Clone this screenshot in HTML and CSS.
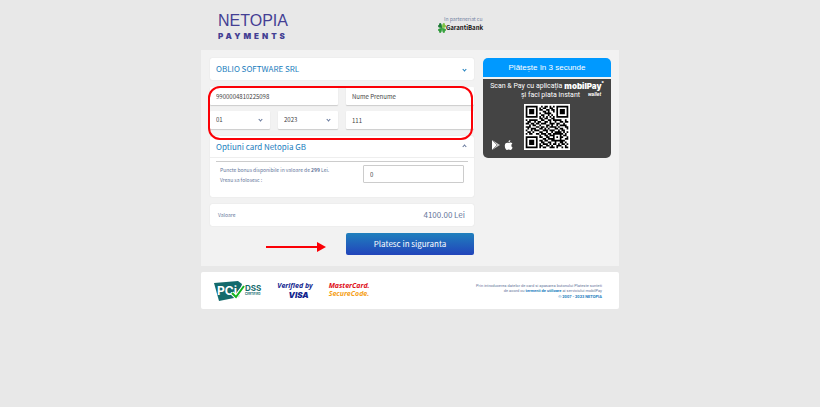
FILE: index.html
```html
<!DOCTYPE html>
<html lang="ro">
<head>
  <meta charset="UTF-8" />
  <meta name="viewport" content="width=device-width, initial-scale=1" />
  <title>Netopia Payments</title>
  <link rel="stylesheet" href="styles.css">
</head>
<body>

  <div class="page">
    <header>
      <div class="logo">
        <div class="logo-name">NETOPIA</div>
        <div class="logo-sub">PAYMENTS</div>
      </div>
      <div class="partner">
        <div class="partner-label">In parteneriat cu</div>
        <div class="partner-name">
          <svg width="8" height="10" viewBox="0 0 8 10" aria-hidden="true">
            <path d="M4 5C1 5 0 4 0 3q0-1 1-1Q1 0 2 0q2 0 2 5z" fill="#1c7a35"/>
            <path d="M4 5C1 5 0 6 0 7q0 1 1 1Q1 10 2 10q2 0 2-5z" fill="#2f9a3a"/>
            <path d="M4 5C7 5 8 4 8 3q0-1-1-1Q7 0 6 0 4 0 4 5z" fill="#7cc242"/>
            <path d="M4 5C7 5 8 6 8 7q0 1-1 1Q7 10 6 10 4 10 4 5z" fill="#3aa43f"/>
          </svg>
          <span>GarantiBank</span>
        </div>
      </div>
    </header>

    <main class="panel">
      <form class="payment" onsubmit="return false">
        <button type="button" class="card card-title">
          <span>OBLIO SOFTWARE SRL</span>
          <span class="chevron blue"></span>
        </button>

        <div class="card-fields">
          <input type="text" aria-label="Numar card" value="9900004810225098">
          <input type="text" aria-label="Nume pe card" value="Nume Prenume">
          <div class="expiry">
            <div class="select">
              <select aria-label="Luna"><option>01</option></select>
              <span class="chevron"></span>
            </div>
            <div class="select">
              <select aria-label="An"><option>2023</option></select>
              <span class="chevron"></span>
            </div>
          </div>
          <input type="text" aria-label="CVV" value="111">
        </div>

        <section class="card options">
          <button type="button" class="card-title">
            <span>Optiuni card Netopia GB</span>
            <span class="chevron up"></span>
          </button>
          <div class="bonus">
            <label for="bonus">Puncte bonus disponibile in valoare de <b>299</b> Lei.<br>Vreau sa folosesc :</label>
            <input type="text" id="bonus" value="0">
          </div>
        </section>

        <div class="card total">
          <span>Valoare</span>
          <span class="amount">4100.00 Lei</span>
        </div>

        <div class="actions">
          <svg class="arrow" width="60" height="10" viewBox="0 0 60 10" aria-hidden="true">
            <path d="M0 5h52" stroke="#fb0006" stroke-width="2"/>
            <path d="M51 0l9 5-9 5z" fill="#fb0006"/>
          </svg>
          <button type="submit" class="pay">Platesc in siguranta</button>
        </div>
      </form>

      <aside class="wallet">
        <div class="wallet-head">Plătește în 3 secunde</div>
        <div class="wallet-body">
          <div class="wallet-line">
            <span>Scan &amp; Pay cu aplicația</span>
            <strong>mobilPay<sup>°</sup></strong>
          </div>
          <div class="wallet-line second">
            <span>și faci plata instant</span>
            <em>wallet</em>
          </div>
          <div class="wallet-code">
            <div class="stores">
              <svg width="9" height="10" viewBox="0 0 9 10" aria-hidden="true">
                <path d="M1 0v10l8-5z" fill="#c9c9c9"/>
                <path d="M1 0l5 5-5 5z" fill="#fff"/>
                <path d="M1 0l5 5-5 5" fill="none" stroke="#666" stroke-width=".6"/>
              </svg>
              <svg width="9" height="10" viewBox="0 0 9 10" aria-hidden="true">
                <path d="M4.500 3C3.500 2.500 1 2.300.8 5.500.7 8 2 10 3 10q.8-.4 1.700-.4T6.400 10C7.300 10 8.400 8.400 8.600 7.400 7 6.600 7 4.300 8.400 3.600 7.200 2 5.300 2.600 4.500 3zM4.400 2.300Q4.500.3 6.300 0 6.400 2 4.400 2.300z" fill="#fff"/>
              </svg>
            </div>
            <svg class="qr" id="qr" width="46" height="46" viewBox="-1 -1 27 27" role="img" aria-label="Cod QR"></svg>
          </div>
        </div>
      </aside>
    </main>

    <footer>
      <div class="badges">
        <div class="pci">
          <svg width="31" height="20" viewBox="0 0 31 20" aria-hidden="true">
            <path d="M0 2L24 0 28 3 25 16 5 20z" fill="#136a6c"/>
            <text x="3" y="14" class="pci-text">PCi</text>
            <path d="M18 12l4 4 8-11" fill="none" stroke="#fff" stroke-width="4"/>
            <path d="M18 12l4 4 8-11" fill="none" stroke="#12b41d" stroke-width="2"/>
          </svg>
          <div class="dss">DSS<small>CERTIFIED</small></div>
        </div>
        <div class="visa"><i>Verified by</i><b>VISA</b></div>
        <div class="mastercard">MasterCard.<span>SecureCode.</span></div>
      </div>
      <div class="legal">
        <p>Prin introducerea datelor de card si apasarea butonului Plateste sunteti<br>
        de acord cu <a href="#">termenii de utilizare</a> ai serviciului mobilPay</p>
        <a href="#">© 2007 - 2023 NETOPIA</a>
      </div>
    </footer>
  </div>

  <script src="script.js"></script>
</body>
</html>
```
FILE: styles.css
```css
* {
  box-sizing: border-box;
}
body {
  margin: 0;
  background: #e8e8e8;
  color: #444;
  font-family: 'Noto Sans CJK SC', 'Open Sans', sans-serif;
  font-size: 6px;
  line-height: 10px;
}
input, select, button {
  font: inherit;
  color: inherit;
  margin: 0;
}
a {
  color: #1a7dbd;
  font-weight: bold;
  text-decoration: none;
}
.page {
  max-width: 418px;
  margin: 0 auto;
}

/* header */
header {
  display: flex;
  padding: 12px 17px 8px;
}
.logo {
  flex: 1;
  color: #443f94;
  font-family: 'Liberation Sans', sans-serif;
}
.logo-name {
  font-size: 16px;
  line-height: 18px;
}
.logo-sub {
  font-family: Inter, sans-serif;
  font-size: 8px;
  font-weight: 900;
  line-height: 12px;
  letter-spacing: 3px;
}
.partner {
  flex: 0 0 164px;
  color: #7483a3;
  font-size: 5px;
}
.partner-label {
  padding: 2px 0 0 6px;
  line-height: 9px;
}
.partner-name {
  display: flex;
  align-items: center;
  color: #111;
  font-size: 6px;
  font-weight: bold;
}

/* main panel */
.panel {
  display: grid;
  grid-template-columns: minmax(0, 264fr) minmax(0, 128fr);
  align-items: start;
  gap: 9px;
  padding: 8px 8px 11px 9px;
  background: #f2f2f2;
}
.payment {
  display: flex;
  flex-direction: column;
  gap: 7px;
}
.card {
  background: #fff;
  border: 0;
  border-radius: 2px;
  box-shadow: 0 0 1px #ccc;
}
.card-title {
  display: flex;
  align-items: center;
  justify-content: space-between;
  width: 100%;
  height: 22px;
  padding: 0 8px 0 6px;
  color: #1a7dbd;
  font-size: 8px;
  cursor: pointer;
}
.chevron {
  width: 3px;
  height: 3px;
  border: solid #66779b;
  border-width: 0 1px 1px 0;
  transform: rotate(45deg);
}
.chevron.blue {
  border-color: #1a7dbd;
}
.chevron.up {
  transform: rotate(225deg);
}
.card-fields {
  position: relative;
  display: grid;
  grid-template-columns: 1fr 1fr;
  gap: 6px 8px;
}
/* red outline over the card data */
.card-fields::after {
  content: '';
  position: absolute;
  inset: -1px 1px -11px -2px;
  border: 2px solid #fb0006;
  border-radius: 12px;
  pointer-events: none;
}
input, select {
  width: 100%;
  min-width: 0;
  height: 18px;
  padding: 0 6px;
  background: #fff;
  border: 0;
  border-radius: 1px;
  box-shadow: 0 1px 1px #ccc;
  appearance: none;
}
.expiry {
  display: grid;
  grid-template-columns: 1fr 1fr;
  gap: 8px;
}
.select {
  position: relative;
}
.select .chevron {
  position: absolute;
  right: 8px;
  top: 7px;
  pointer-events: none;
}
.options .card-title {
  background: none;
  border: 0;
  border-bottom: 1px solid #eee;
}
.bonus {
  display: flex;
  justify-content: space-between;
  margin: 3px 6px 0;
  padding: 3px 4px 12px;
  border-top: 1px solid #ccc;
  color: #66779b;
  font-size: 5px;
}
.bonus input {
  width: 101px;
  border: 1px solid #ccc;
  box-shadow: none;
  color: #444;
  font-size: 6px;
}
.total {
  display: flex;
  align-items: center;
  justify-content: space-between;
  height: 22px;
  padding: 0 9px 0 8px;
  color: #66779b;
  font-size: 5px;
}
.amount {
  font-size: 8px;
}
.actions {
  display: flex;
  align-items: center;
  justify-content: flex-end;
  gap: 20px;
}
.arrow {
  margin-top: 6px;
}
.pay {
  width: 128px;
  height: 22px;
  padding: 0;
  border: 0;
  border-radius: 2px;
  background: linear-gradient(#2080bd, #2244bb);
  color: #fff;
  font-size: 8px;
  cursor: pointer;
}

/* wallet box */
.wallet {
  display: flex;
  flex-direction: column;
  gap: 2px;
  color: #fff;
  font-family: Roboto, sans-serif;
}
.wallet-head {
  border-radius: 5px 5px 0 0;
  background: #0099ff;
  font-family: 'Liberation Sans', sans-serif;
  font-size: 8px;
  line-height: 19px;
  text-align: center;
}
.wallet-body {
  padding: 3px 8px 8px;
  border-radius: 0 0 5px 5px;
  background: #444;
  font-size: 7px;
}
.wallet-line {
  display: flex;
  justify-content: center;
  gap: 2px;
  line-height: 9px;
  white-space: nowrap;
}
.wallet-line strong {
  font-family: Inter, sans-serif;
  font-size: 8px;
  font-weight: 900;
}
.wallet-line sup {
  font-size: 5px;
  line-height: 0;
}
.wallet-line.second {
  gap: 8px;
  padding-left: 28px;
}
.wallet-line em {
  font-size: 5px;
  font-weight: bold;
  line-height: 7px;
}
.wallet-code {
  display: grid;
  grid-template-columns: 1fr auto 1fr;
  align-items: end;
  margin-top: 4px;
}
.stores {
  display: flex;
  gap: 4px;
}
.qr {
  background: #fff;
}

/* footer */
footer {
  display: flex;
  justify-content: space-between;
  margin-top: 6px;
  padding: 9px 17px 8px 13px;
  background: #fff;
  border-radius: 2px;
}
.badges {
  display: flex;
  gap: 16px;
  font-size: 8px;
  line-height: 8px;
}
.pci {
  display: flex;
  color: #136a6c;
}
.pci-text {
  fill: #fff;
  font: bold 12px Inter, sans-serif;
}
.dss {
  padding-top: 3px;
  font-family: Inter, sans-serif;
  font-weight: bold;
}
.dss small {
  display: block;
  font-size: 3px;
  line-height: 5px;
}
.visa {
  color: #13278f;
  font-family: 'Open Sans', sans-serif;
  font-weight: bold;
  font-size: 7px;
  line-height: 10px;
  text-align: right;
}
.visa b {
  display: block;
  padding-right: 4px;
  font-family: Inter, sans-serif;
  font-size: 8px;
  font-style: italic;
  line-height: 8px;
}
.mastercard {
  padding-top: 1px;
  color: #e0101a;
  font-family: 'Open Sans', sans-serif;
  font-weight: bold;
  font-style: italic;
  font-size: 7px;
}
.mastercard span {
  display: block;
  color: #f5a11a;
}
.legal {
  padding-top: 2px;
  color: #66779b;
  font-family: Roboto, sans-serif;
  font-size: 4px;
  line-height: 5px;
  text-align: right;
}
.legal p {
  margin: 0 0 1px;
}
```
FILE: script.js
```js
// QR modules, one string per row
const rows = [
  '1111111001011010101111111',
  '1000001010110011001000001',
  '1011101011001101101011101',
  '1011101000110100101011101',
  '1011101010011110001011101',
  '1000001001100101001000001',
  '1111111010101010101111111',
  '0000000011011001100000000',
  '1011111001100110111110010',
  '0110010110011010010011011',
  '1101101101110011101100100',
  '0010110010001101001011110',
  '1110001101101011110100011',
  '0101110011010100011011001',
  '1001011100111011100101100',
  '0110100011001001011110101',
  '1011001101110110111111010',
  '0000000010011011100010110',
  '1111111011001100101011001',
  '1000001000110111100010011',
  '1011101011011001111111100',
  '1011101001100110010011010',
  '1011101010111010110101101',
  '1000001011001101001110010',
  '1111111010110011101001011'
];
let d = '';
rows.forEach((row, y) => {
  [...row].forEach((cell, x) => {
    if (cell === '1') d += `M${x} ${y}h1v1h-1z`;
  });
});
document.getElementById('qr').innerHTML = `<path d="${d}" fill="#000"/>`;
```
